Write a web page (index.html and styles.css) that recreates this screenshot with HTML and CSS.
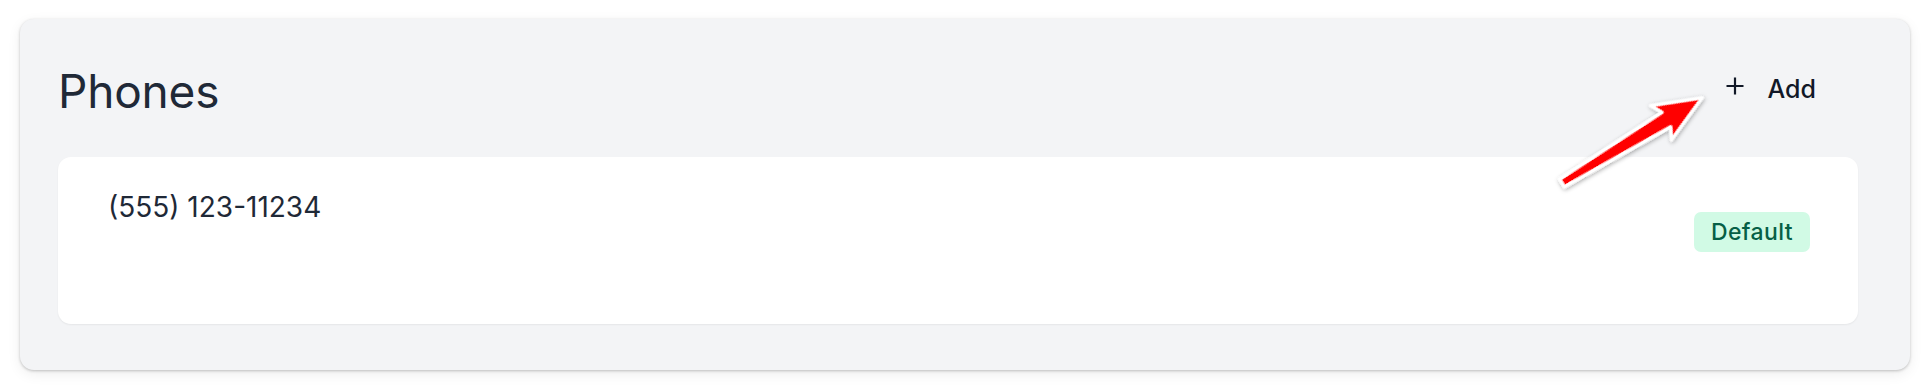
FILE: index.html
```html
<!DOCTYPE html>
<html lang="en">
<head>
    <meta charset="UTF-8">
    <meta name="viewport" content="width=device-width, initial-scale=1.0">
    <title>Phones</title>
    <link rel="stylesheet" href="styles.css">
</head>
<body>
    <div class="panel">
        <div class="panel-header">
            <h2 class="panel-title">Phones</h2>
            <button class="add-button">
                <svg class="add-icon" viewBox="0 0 20 20" width="20" height="20">
                    <path d="M10 1.5v17M1.5 10h17" stroke="#111827" stroke-width="2.2" stroke-linecap="butt" fill="none"/>
                </svg>
                <span>Add</span>
            </button>
        </div>

        <div class="phone-item">
            <span class="phone-number">(555) 123-11234</span>
            <span class="badge-default">Default</span>
        </div>
    </div>

    <!-- annotation arrow -->
    <svg class="arrow-note" width="190" height="130" viewBox="0 0 190 130">
        <defs>
            <filter id="arrowShadow" x="-20%" y="-20%" width="140%" height="140%">
                <feDropShadow dx="0" dy="1.5" stdDeviation="2" flood-color="#000" flood-opacity="0.35"/>
            </filter>
        </defs>
        <g transform="translate(24 104) rotate(-31.3)" filter="url(#arrowShadow)">
            <polygon points="0,-4.5 122,-8.5 116,-20 164,0 116,20 122,8.5 0,4.5"
                     fill="#ff0000" stroke="#ffffff" stroke-width="3.5" stroke-linejoin="round"/>
        </g>
    </svg>
</body>
</html>
```

FILE: styles.css
```css
body {
    margin: 0;
    padding: 19px 20px 20px 20px;
    background-color: #ffffff;
    font-family: Inter, "Noto Sans", sans-serif;
    color: #1f2937;
    position: relative;
}

.panel {
    width: 1890px;
    box-sizing: border-box;
    padding: 36px 52px 46px 38px;
    background-color: #f3f4f6;
    border-radius: 14px;
    box-shadow: 0 1px 3px rgba(0, 0, 0, 0.22), 0 4px 14px rgba(0, 0, 0, 0.07);
}

.panel-header {
    display: flex;
    justify-content: space-between;
    align-items: center;
    height: 72px;
    margin-bottom: 30px;
    padding-right: 42px;
}

.panel-title {
    margin: 0;
    font-size: 46px;
    font-weight: 400;
    color: #1f2937;
    letter-spacing: -0.2px;
}

.add-button {
    display: flex;
    align-items: center;
    gap: 23px;
    background: none;
    border: none;
    padding: 0;
    font-family: inherit;
    font-size: 25px;
    font-weight: 500;
    color: #111827;
    cursor: pointer;
    margin-top: -4px;
}

.add-icon {
    width: 20px;
    height: 20px;
    margin-top: -6px;
}

.phone-item {
    display: flex;
    justify-content: space-between;
    align-items: flex-start;
    height: 167px;
    box-sizing: border-box;
    padding: 30px 48px 0 50px;
    background-color: #ffffff;
    border-radius: 13px;
    box-shadow: 0 1px 2px rgba(0, 0, 0, 0.06);
}

.phone-number {
    font-size: 28px;
    line-height: 40px;
    color: #1f2937;
}

.badge-default {
    margin-top: 25px;
    padding: 0 17px;
    height: 40px;
    line-height: 40px;
    background-color: #d1fae5;
    color: #065f46;
    font-size: 23px;
    font-weight: 500;
    letter-spacing: 0.4px;
    border-radius: 7px;
}

/* annotation over the page */
.arrow-note {
    position: absolute;
    left: 1538px;
    top: 79px;
}
```
